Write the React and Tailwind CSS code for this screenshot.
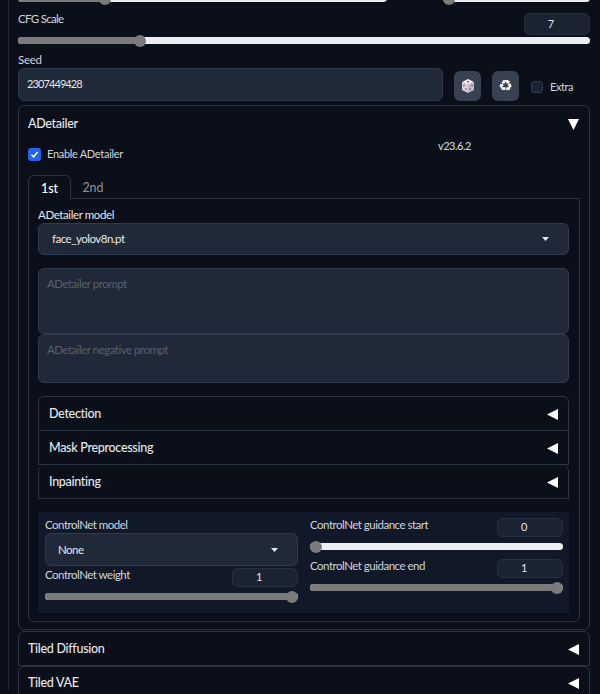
import React from "react";

const Triangle = ({ open }) => (
  <svg width="11" height="11" viewBox="0 0 11 11" className="shrink-0">
    <polygon points={open ? "0,0 11,0 5.5,11" : "11,0 11,11 0,5.5"} fill="#fff" />
  </svg>
);

const Caret = () => (
  <svg width="7" height="4" viewBox="0 0 7 4">
    <polygon points="0,0 7,0 3.5,4" fill="#e5e7eb" />
  </svg>
);

// thumb stays inside the track, so its centre runs from 6px to width - 6px
const Slider = ({ pct, className = "" }) => (
  <div className={`relative h-[7px] rounded-full bg-[#eceef0] ${className}`}>
    <div
      className="h-full rounded-full bg-[#7b7b7b]"
      style={{ width: `calc((100% - 12px) * ${pct / 100} + 6px)` }}
    />
    <div
      className="absolute top-1/2 w-[12px] h-[12px] -translate-y-1/2 rounded-full bg-[#7b7b7b]"
      style={{ left: `calc((100% - 12px) * ${pct / 100})` }}
    />
  </div>
);

const NumberBox = ({ value, className = "" }) => (
  <div className={`h-[19px] rounded-md border border-[#273142] bg-[#1a2332] pr-[12px] flex items-center justify-center text-[11px] text-[#e5e7eb] ${className}`}>
    {value}
  </div>
);

const AccordionRow = ({ title, className = "" }) => (
  <div className={`flex items-center justify-between border-[#2a3445] pr-[10px] text-[12.5px] font-medium tracking-[-0.3px] text-[#e5e7eb] ${className}`}>
    <span>{title}</span>
    <Triangle />
  </div>
);

const Die = () => (
  <svg width="14" height="16" viewBox="0 0 14 16">
    <polygon points="7,1 13,4 7,7 1,4" fill="#f3eef3" />
    <polygon points="1,4 7,7 7,15 1,12" fill="#d9d0dc" />
    <polygon points="13,4 7,7 7,15 13,12" fill="#c4b9ca" />
    <circle cx="7" cy="3.8" r="1.1" fill="#d8555f" />
    <circle cx="3" cy="7.5" r="0.8" fill="#5b4a78" />
    <circle cx="5" cy="11" r="0.8" fill="#5b4a78" />
    <circle cx="11" cy="7.5" r="0.8" fill="#5b4a78" />
    <circle cx="9" cy="11" r="0.8" fill="#5b4a78" />
  </svg>
);

export default function App() {
  return (
    <div className="h-[694px] w-[600px] overflow-hidden bg-[#0b0f19] font-['Lato',sans-serif] text-[#d1d5db]">
      <div className="ml-[8px] h-full border-l border-[#1f2937] pl-[9px] pr-[10px]">
        {/* Sliders cut off at the top */}
        <div className="-mt-[5px] flex justify-between">
          <Slider pct={22.7} className="w-[369px]" />
          <Slider pct={0} className="w-[147px]" />
        </div>

        {/* CFG Scale */}
        <div className="mt-[11px] flex items-start justify-between">
          <span className="text-[11.5px] leading-[12px] tracking-[-0.7px]">CFG Scale</span>
          <NumberBox value="7" className="h-[22px] w-[66px]" />
        </div>
        <Slider pct={20.7} className="mt-[2px]" />

        {/* Seed */}
        <div className="mt-[8px] text-[11.5px] tracking-[-0.3px] leading-[15px]">Seed</div>
        <div className="mt-[1px] flex items-center">
          <div className="flex h-[33px] w-[425px] items-center rounded-md border border-[#2f3a4c] bg-[#1f2937] pl-[8px] text-[11px] tracking-[-0.9px] text-[#e5e7eb]">
            2307449428
          </div>
          <button className="ml-[11px] mt-[3px] flex h-[30px] w-[27px] items-center justify-center rounded-md bg-[#374151]">
            <Die />
          </button>
          <button className="ml-[11px] mt-[3px] flex h-[30px] w-[27px] items-center justify-center rounded-md bg-[#374151] font-['DejaVu_Sans',sans-serif] text-[16px] text-white">
            ♻
          </button>
          <span className="ml-[12px] mt-[5px] h-[12px] w-[12px] rounded-[3px] border border-[#2f3a4c] bg-[#1a2332]" />
          <span className="ml-[7px] mt-[5px] text-[11px] tracking-[-0.4px]">Extra</span>
        </div>

        {/* ADetailer */}
        <div className="mt-[4px] h-[525px] rounded-md border border-[#2a3445] px-[9px] pt-[9px]">
          <div className="flex items-center justify-between pr-[1px] text-[12.5px] font-medium leading-[18px] tracking-[-0.3px] text-[#e5e7eb]">
            <span>ADetailer</span>
            <Triangle open />
          </div>
          <div className="relative mt-[13px] flex items-center text-[11px] leading-[16px] tracking-[-0.3px]">
            <span className="flex h-[13px] w-[13px] items-center justify-center rounded-[3px] bg-[#2563eb]">
              <svg width="9" height="9" viewBox="0 0 9 9">
                <path d="M1.5 4.8 L3.6 6.8 L7.6 2" fill="none" stroke="#fff" strokeWidth="1.5" />
              </svg>
            </span>
            <span className="ml-[6px]">Enable ADetailer</span>
            <span className="absolute left-[410px] -top-[8px] font-medium tracking-[-0.5px]">v23.6.2</span>
          </div>

          {/* Tabs */}
          <div className="mt-[13px] flex h-[24px] text-[12.5px]">
            <div className="relative z-10 flex w-[43px] items-center justify-center rounded-t-md border border-b-0 border-[#2a3445] bg-[#0b0f19] pt-[3px] font-medium text-white">1st</div>
            <div className="ml-[2px] flex w-[40px] items-center justify-center pt-[3px] text-[#8b919c]">2nd</div>
          </div>
          <div className="-mt-px h-[424px] rounded-b-md border border-[#2a3445] pl-[9px] pr-[10px] pt-[8px]">
            <div className="text-[11.5px] leading-[15px] tracking-[-0.4px] text-[#e5e7eb]">ADetailer model</div>
            <div className="mt-[1px] flex h-[32px] items-center justify-between rounded-md border border-[#2f3a4c] bg-[#1f2937] pl-[13px] pr-[19px] text-[11.5px] tracking-[-0.5px] text-[#e5e7eb]">
              face_yolov8n.pt
              <Caret />
            </div>
            <div className="mt-[13px] h-[66px] rounded-md border border-[#2f3a4c] bg-[#1f2937] pl-[8px] pt-[6px] text-[11.5px] tracking-[-0.5px] text-[#566071]">ADetailer prompt</div>
            <div className="h-[49px] rounded-md border border-[#2f3a4c] bg-[#1f2937] pl-[8px] pt-[6px] text-[11.5px] tracking-[-0.5px] text-[#566071]">ADetailer negative prompt</div>

            <div className="mt-[13px]">
              <AccordionRow title="Detection" className="h-[35px] rounded-t-md border pl-[10px] pt-[1px]" />
              <AccordionRow title="Mask Preprocessing" className="h-[34px] border-x border-b pl-[10px] pt-[2px]" />
              <AccordionRow title="Inpainting" className="h-[34px] rounded-t-md border-x border-b pl-[10px] pt-[1px]" />
            </div>

            {/* ControlNet panel */}
            <div className="mt-[13px] grid h-[101px] grid-cols-2 gap-x-[12px] bg-[#111827] pl-[7px] pr-[6px] pt-[6px] text-[11.5px] tracking-[-0.5px] text-[#d1d5db]">
              <div>
                <div className="leading-[14px]">ControlNet model</div>
                <div className="mt-[1px] flex h-[33px] items-center justify-between rounded-md border border-[#2f3a4c] bg-[#1f2937] pl-[12px] pr-[19px] text-[#e5e7eb]">
                  None
                  <Caret />
                </div>
                <div className="mt-[2px] flex items-start justify-between">
                  <span className="leading-[14px]">ControlNet weight</span>
                  <NumberBox value="1" className="w-[66px]" />
                </div>
                <Slider pct={100} className="mt-[6px] bg-[#7b7b7b]" />
              </div>
              <div>
                <div className="flex items-start justify-between">
                  <span className="leading-[14px]">ControlNet guidance start</span>
                  <NumberBox value="0" className="w-[66px]" />
                </div>
                <Slider pct={0} className="mt-[6px]" />
                <div className="mt-[9px] flex items-start justify-between">
                  <span className="leading-[14px]">ControlNet guidance end</span>
                  <NumberBox value="1" className="w-[66px]" />
                </div>
                <Slider pct={100} className="mt-[6px] bg-[#7b7b7b]" />
              </div>
            </div>
          </div>
        </div>

        <AccordionRow title="Tiled Diffusion" className="mt-[1px] h-[35px] rounded-t-md border pl-[9px] pt-[1px]" />
        <AccordionRow title="Tiled VAE" className="h-[35px] rounded-t-md border pl-[9px]" />
      </div>
    </div>
  );
}
